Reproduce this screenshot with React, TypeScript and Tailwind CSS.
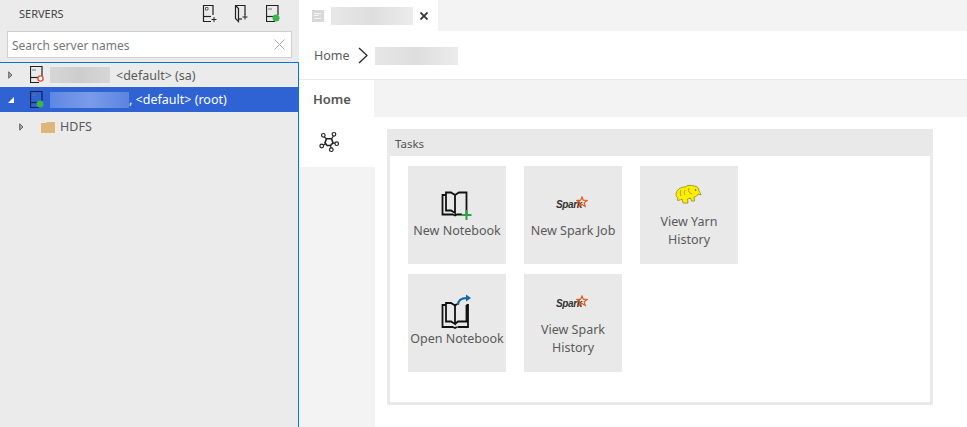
import type { ReactNode } from 'react'

const font = { fontFamily: '"Noto Sans", "Open Sans", sans-serif' }

function ServerIcon({ badge, color = '#222' }: { badge?: ReactNode; color?: string }) {
  return (
    <svg width="14" height="18" viewBox="0 0 14 18" fill="none">
      <path d="M9 16.500H.5V.5H12V10" stroke={color} strokeWidth="1.200" />
      <path d="M.5 11.500H9" stroke={color} strokeWidth="1.200" />
      <path d="M3 3v2M5 3v2" stroke="#777" strokeWidth="1" />
      {badge}
    </svg>
  )
}

function NewServerIcon() {
  return (
    <svg width="16" height="18" viewBox="0 0 16 18" fill="none">
      <path d="M9 16.500H1.500V.5H11V10" stroke="#222" strokeWidth="1.200" />
      <path d="M1.500 11.500H9" stroke="#222" strokeWidth="1.200" />
      <path d="M3.500 2.500h2.500V5H3.500z" stroke="#666" strokeWidth="1" />
      <path d="M12 12v5M9.500 14.500h5" stroke="#222" strokeWidth="1" />
    </svg>
  )
}

function NewGroupIcon() {
  return (
    <svg width="16" height="18" viewBox="0 0 16 18" fill="none">
      <path d="M1.500.5H11V10M1.500.5V13.500L4.500 16.500V3.500L1.500.5Z" stroke="#222" strokeWidth="1.200" />
      <path d="M4.500 14H8" stroke="#222" strokeWidth="1.200" />
      <path d="M11 9.500v5M8.500 12h5" stroke="#222" strokeWidth="1" />
    </svg>
  )
}

function FolderIcon() {
  return (
    <svg width="16" height="14" viewBox="0 0 16 14">
      <path d="M.5 2.500V13.500H15.500V1.500H7L6 2.500Z" fill="#dcb67a" stroke="#f3eee4" />
    </svg>
  )
}

function Caret({ open }: { open?: boolean }) {
  if (open) {
    return (
      <svg width="6" height="6" viewBox="0 0 6 6">
        <path d="M0 6H6V0Z" fill="#fff" />
      </svg>
    )
  }
  return (
    <svg width="5" height="8" viewBox="0 0 5 8" fill="none">
      <path d="M.7.800 4 4 .7 7.200Z" stroke="#666" strokeWidth="1" fill="#aaa" />
    </svg>
  )
}

function NewNotebookIcon() {
  return (
    <svg width="32" height="30" viewBox="0 0 32 30" fill="none">
      <path
        d="M5 4H1.500V23.500H12M5 1.500h5l4 2.500v18l-4-2.500H5ZM14 4l4-2.500h7.500V23M12 23.500l2 1 2-1h5"
        stroke="#111"
        strokeWidth="1.800"
      />
      <path d="M25.500 19v10M20.500 24h10" stroke="#2f9e44" strokeWidth="2" />
    </svg>
  )
}

function OpenNotebookIcon() {
  return (
    <svg width="32" height="36" viewBox="0 0 32 36" fill="none">
      <path
        d="M5 12H1.500V34H12M5 10h5l4 2.500V31l-4-2.500H5ZM14 12.500l2-1.500M14 31l3-2.500h8.500V12M25.500 12H27V34H16.500M12 34l2 1 2-1"
        stroke="#111"
        strokeWidth="1.800"
      />
      <path d="M17 12c0-5 4-7 9-7" stroke="#1565a8" strokeWidth="2" />
      <path d="M25 1.500 30 5l-5 3.500Z" fill="#1565a8" />
    </svg>
  )
}

function SparkLogo() {
  return (
    <span className="relative mb-[10px] flex h-[15px] w-[30px] -translate-x-[2px] items-end">
      <span
        className="text-[10px] leading-[13px] italic tracking-[-0.4px] text-[#333]"
        style={{ fontFamily: '"Liberation Sans", sans-serif', fontWeight: 600 }}
      >
        Spark
      </span>
      <svg className="absolute top-0 right-[-2px]" width="12" height="12" viewBox="0 0 12 12" fill="none">
        <path d="M6 1 7.300 4.200 11 4.500 8.200 6.800 9.200 10.500 6 8.500 3 10.500 3.800 6.800 1 4.500 4.700 4.200Z" stroke="#e25a1c" strokeWidth="1.200" />
      </svg>
    </span>
  )
}

function HadoopLogo() {
  return (
    <svg className="mb-[6px] -translate-x-[1px]" width="28" height="22" viewBox="0 0 28 22">
      <path
        d="M2 11C2 6 6 3 11 3c2-2 6-2 9-1 3 0 5 2 5 5 1 2 2 3 2 4-1 0-2-1-3-1-1 2-2 3-4 3l.5 4h-3l-1-3-3 1 .5 4H9l-1-4c-2 1-4 2-5 1 1-1 1-2 0-3-1-1-1-2-1-2Z"
        fill="#ffee00"
        stroke="#8a8a20"
        strokeWidth=".8"
      />
      <path d="M15 4c-1 3 0 5 3 6M7 6c-1 2-1 4 0 6M11 6c-1 2-1 3 0 5" stroke="#8a8a20" strokeWidth=".8" fill="none" />
      <circle cx="21.500" cy="6" r=".8" fill="#444" />
    </svg>
  )
}

function HubIcon() {
  return (
    <svg width="22" height="22" viewBox="0 0 22 22" fill="none" stroke="#222" strokeWidth="1.200">
      <path d="M8.500 7.800h5l1.500 4-2.500 2.700H9l-2-2.700Z" strokeWidth="1.600" />
      <circle cx="5.300" cy="4.300" r="1.800" />
      <circle cx="16" cy="3.300" r="1.800" />
      <circle cx="18.700" cy="12.700" r="1.800" />
      <circle cx="13.300" cy="18.700" r="1.800" />
      <circle cx="3.700" cy="15" r="1.800" />
      <path d="M6.300 6 8.500 7.800M15.500 5l-2 2.800M17 12.300l-2-.5M13 17l-.5-2.500M5.300 14.300 7 13" />
    </svg>
  )
}

function Blur({ className }: { className: string }) {
  return <span className={`block ${className}`} />
}

function TaskTile({ icon, label, wide }: { icon: ReactNode; label: ReactNode; wide?: boolean }) {
  return (
    <div className="flex h-[98px] w-[98px] flex-col items-center justify-center bg-[#e9e9e9] text-center text-[12.500px] leading-[18px] text-[#5a5a5a]">
      <div className="flex h-[30px] shrink-0 items-end justify-center">{icon}</div>
      <div className={wide ? 'mt-[1px] whitespace-nowrap' : 'mt-[1px] px-4'}>{label}</div>
    </div>
  )
}

export default function App() {
  return (
    <div className="flex h-[427px] w-[967px] overflow-hidden bg-white text-[#333]" style={font}>
      {/* Sidebar */}
      <aside className="flex w-[299px] shrink-0 flex-col bg-[#ebebeb]">
        <div className="flex h-[28px] items-center pr-[19px] pl-[19px]">
          <span className="mt-[1px] text-[11px] text-[#444]">SERVERS</span>
          <div className="ml-auto flex items-center gap-[16px]">
            <NewServerIcon />
            <NewGroupIcon />
            <ServerIcon badge={<circle cx="10" cy="13" r="3.500" fill="#3bb44a" />} />
          </div>
        </div>
        <div className="mx-[7px] mt-[3px] flex h-[27px] w-[285px] items-center border border-[#cfcfcf] bg-white pr-[6px] pl-[4px]">
          <span className="mt-[2px] text-[12px] text-[#777]">Search server names</span>
          <svg className="ml-auto" width="11" height="11" viewBox="0 0 11 11" stroke="#aaa" strokeWidth="1">
            <path d="M.5.500l10 10M10.500.500l-10 10" />
          </svg>
        </div>
        <div className="mt-[4px] flex-1 border-t border-r border-[#0078d7] text-[12.500px] text-[#5a5a5a]">
          <div className="flex h-[24px] items-center">
            <span className="flex w-[30px] justify-center pr-[10px]"><Caret /></span>
            <ServerIcon
              badge={<circle cx="10.500" cy="12.500" r="2.600" fill="#fff" stroke="#e2502a" strokeWidth="1.400" />}
            />
            <Blur className="ml-[6px] h-[16px] w-[60px] bg-gradient-to-r from-[#d6d6d6] via-[#cdcdcd] to-[#d6d6d6]" />
            <span className="mt-[2px] ml-[6px]">&lt;default&gt; (sa)</span>
          </div>
          <div className="flex h-[25px] items-center bg-[#2f63d3] text-white">
            <span className="flex w-[30px] justify-center pr-[8px]"><Caret open /></span>
            <ServerIcon color="#14224a" badge={<circle cx="10" cy="13" r="3.500" fill="#3bb44a" />} />
            <Blur className="ml-[6px] h-[16px] w-[79px] bg-gradient-to-r from-[#5f87e2] via-[#7a9be8] to-[#5c84e0]" />
            <span className="mt-[2px]">, &lt;default&gt; (root)</span>
          </div>
          <div className="flex h-[30px] items-center pl-[19px]">
            <Caret />
            <span className="ml-[16px]"><FolderIcon /></span>
            <span className="ml-[4px]">HDFS</span>
          </div>
        </div>
      </aside>

      {/* Editor */}
      <main className="flex min-w-0 flex-1 flex-col">
        <div className="flex h-[31px] shrink-0 bg-[#f3f3f3]">
          <div className="flex w-[139px] items-center bg-white pl-[13px]">
            <span className="flex h-[12px] w-[12px] flex-col justify-center gap-[1.500px] bg-[#d8d8d8] pl-[2px]">
              <span className="h-[1px] w-[7px] bg-[#f5f5f5]" />
              <span className="h-[1px] w-[5px] bg-[#f5f5f5]" />
              <span className="h-[1px] w-[7px] bg-[#f5f5f5]" />
            </span>
            <Blur className="ml-[7px] h-[18px] w-[82px] bg-gradient-to-r from-[#e8e8e8] via-[#dedede] to-[#ececec]" />
            <svg className="ml-[7px]" width="8" height="8" viewBox="0 0 8 8" stroke="#333" strokeWidth="1.800">
              <path d="M.5.500l7 7M7.500.500l-7 7" />
            </svg>
          </div>
        </div>
        <div className="flex h-[49px] shrink-0 items-center border-b border-[#e8e8e8] pl-[15px] text-[12.500px] text-[#5a5a5a]">
          <span className="mt-[2px]">Home</span>
          <svg className="mt-[1px] ml-[8px]" width="11" height="17" viewBox="0 0 11 17" fill="none" stroke="#222" strokeWidth="1.200">
            <path d="M1 1l8 7.500-8 7.500" />
          </svg>
          <Blur className="mt-[1px] ml-[6px] h-[18px] w-[83px] bg-gradient-to-r from-[#e6e6e6] via-[#dedede] to-[#ececec]" />
        </div>
        <div className="flex h-[37px] shrink-0 bg-[#f3f3f3]">
          <div className="flex w-[75px] items-center bg-white pt-[3px] pl-[14px] text-[13px] font-semibold text-[#555]">
            Home
          </div>
        </div>
        <div className="flex flex-1">
          <div className="w-[76px] shrink-0 bg-[#f3f3f3]">
            <div className="flex h-[50px] bg-white pt-[14px] pl-[19px]">
              <HubIcon />
            </div>
          </div>
          <div className="flex-1 pt-[12px] pl-[12px]">
            <div className="h-[276px] w-[546px] border-[3px] border-t-0 border-[#e9e9e9]">
              <div className="-mx-[3px] flex h-[27px] items-center bg-[#e9e9e9] pt-[3px] pl-[8px] text-[11.500px] text-[#555]">
                Tasks
              </div>
              <div className="grid grid-cols-[98px_98px_98px] gap-x-[18px] gap-y-[10px] pt-[10px] pl-[18px]">
                <TaskTile icon={<NewNotebookIcon />} label="New Notebook" wide />
                <TaskTile icon={<SparkLogo />} label="New Spark Job" wide />
                <TaskTile icon={<HadoopLogo />} label="View Yarn History" />
                <TaskTile icon={<OpenNotebookIcon />} label="Open Notebook" wide />
                <TaskTile icon={<SparkLogo />} label="View Spark History" />
              </div>
            </div>
          </div>
        </div>
      </main>
    </div>
  )
}
